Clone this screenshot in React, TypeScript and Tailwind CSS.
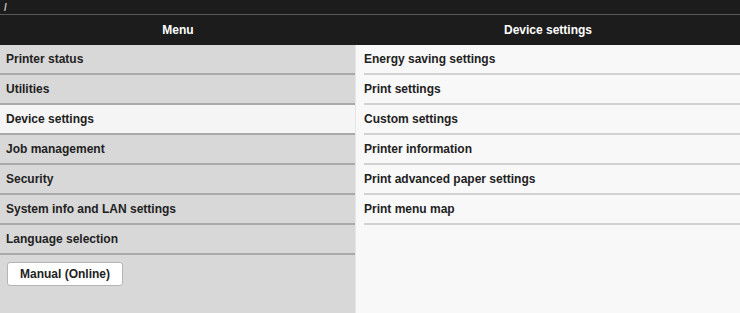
const menu = [
  'Printer status',
  'Utilities',
  'Device settings',
  'Job management',
  'Security',
  'System info and LAN settings',
  'Language selection',
];

const sub = [
  'Energy saving settings',
  'Print settings',
  'Custom settings',
  'Printer information',
  'Print advanced paper settings',
  'Print menu map',
];

export default function App() {
  return (
    <div
      className="w-[740px] h-[313px] overflow-hidden bg-[#f8f8f8] text-[12px] font-bold text-[#222]"
      style={{ fontFamily: '"Liberation Sans", Arial, sans-serif' }}
    >
      {/* Path bar */}
      <div className="h-[15px] bg-[#1c1c1c] px-[4px] text-[10px] leading-[15px] text-[#ccc] border-b border-[#5a5a5a]">
        /
      </div>

      {/* Column headers */}
      <div className="flex h-[30px] bg-[#1c1c1c] text-white leading-[31px]">
        <div className="w-[356px] text-center">Menu</div>
        <div className="flex-1 text-center">Device settings</div>
      </div>

      <div className="flex h-[268px]">
        {/* Left menu */}
        <div className="w-[356px] bg-[#d8d8d8] border-r border-[#e6e6e6]">
          {menu.map((m) => (
            <div
              key={m}
              className={`h-[30px] leading-[29px] px-[6px] border-b-2 border-[#a9a9a9] ${
                m === 'Device settings' ? 'bg-[#f5f5f5]' : ''
              }`}
            >
              {m}
            </div>
          ))}
          <div className="px-[7px] pt-[7px]">
            <button className="w-[116px] h-[24px] bg-white border border-[#b4b4b4] rounded-[3px] text-[12px] font-bold text-[#222]">
              Manual (Online)
            </button>
          </div>
        </div>

        {/* Right submenu */}
        <div className="flex-1 bg-[#f8f8f8]">
          {sub.map((s) => (
            <div key={s} className="h-[30px] pl-[8px]">
              <div className="h-full leading-[29px] border-b-2 border-[#d2d2d2]">{s}</div>
            </div>
          ))}
        </div>
      </div>
    </div>
  );
}
